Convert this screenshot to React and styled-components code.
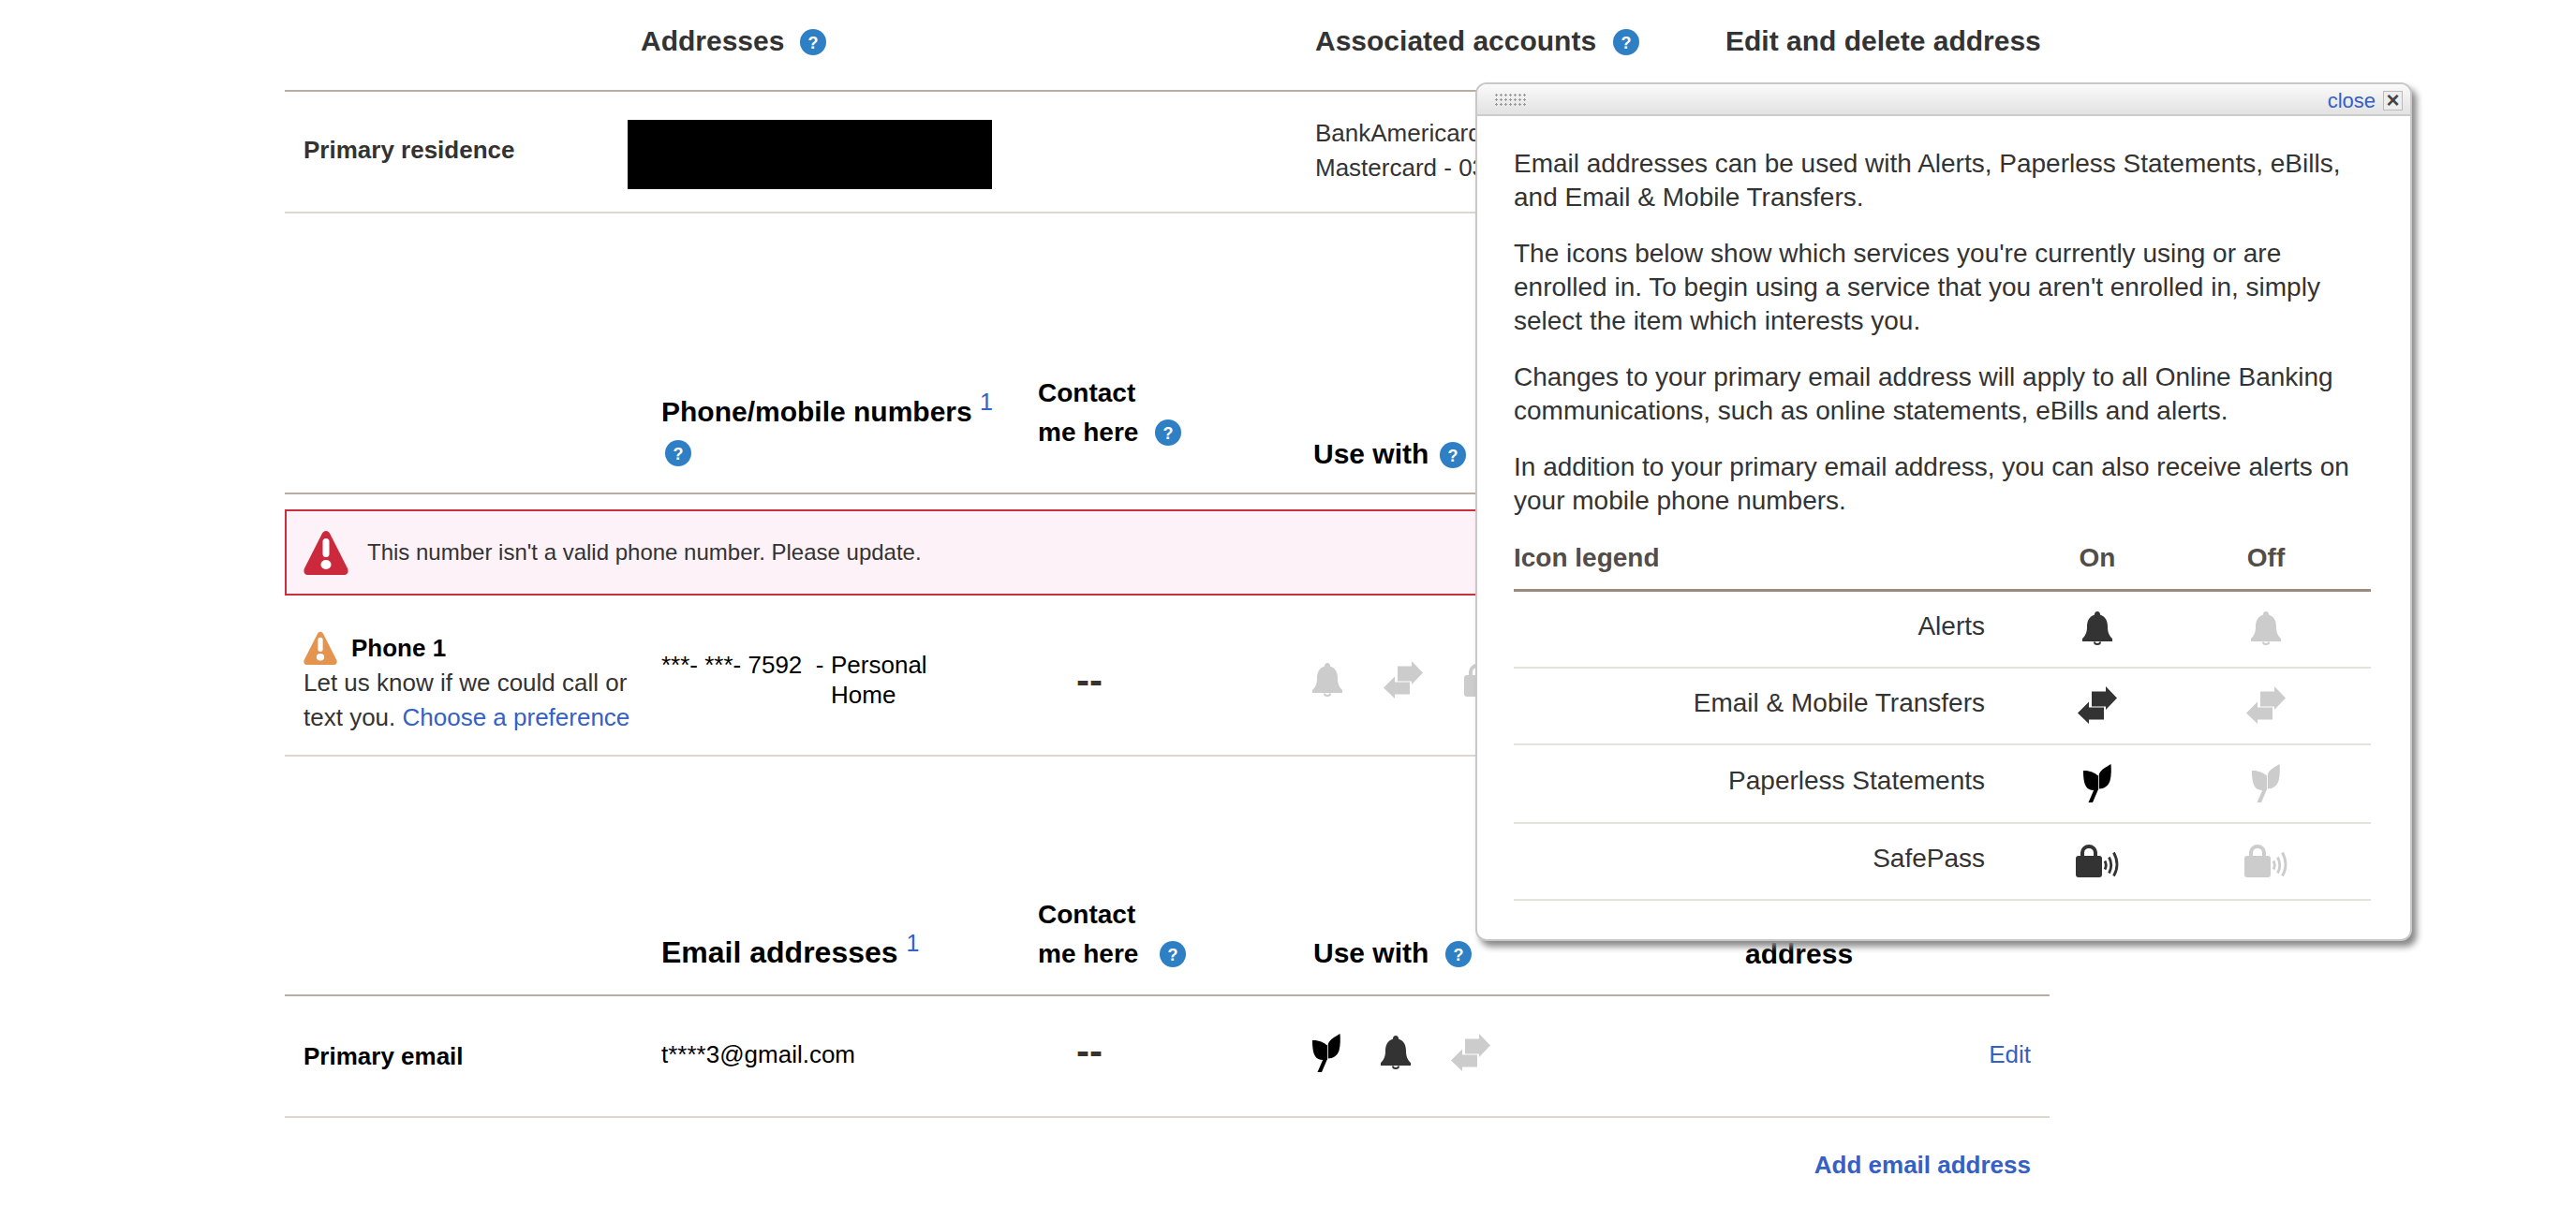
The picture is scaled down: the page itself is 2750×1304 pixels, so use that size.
import React from "react";
import styled, { createGlobalStyle } from "styled-components";

const GlobalStyle = createGlobalStyle`
  body {
    margin: 0;
    background: #fff;
    font-family: "Liberation Sans", Arial, sans-serif;
    color: #333;
  }
`;

const LINK = "#3560c5";

function Help({ gap = 14, block }) {
  return (
    <HelpSvg viewBox="0 0 28 28" $gap={gap} $block={block}>
      <circle cx="14" cy="14" r="14" fill="#2f7fc4" />
      <text x="14" y="20.5" textAnchor="middle" fontSize="18" fontWeight="700" fill="#fff" fontFamily="Liberation Sans">?</text>
    </HelpSvg>
  );
}

function Bell({ off }) {
  return (
    <IconSvg viewBox="0 0 32 36" width="32" height="36" $off={off}>
      <path d="M16 0c2 0 3 1.500 3 3.500 6 2 8 7 8 13 0 6 2 10 5 12.500v3H0v-3c3-2.500 5-6.500 5-12.500 0-6 2-11 8-13C13 1.500 14 0 16 0z" />
      <path d="M12 32.500a4 3.500 0 0 0 8 0h-2a2 1.500 0 0 1-4 0z" />
    </IconSvg>
  );
}

function Arrows({ off }) {
  return (
    <IconSvg viewBox="0 0 42 40" width="42" height="40" $off={off}>
      <path d="M15 5.500h15V0l12 12.500L30 25v-3.500H15z" />
      <path d="M0 28.500l12-12v6h16v13H12v4.500z" />
    </IconSvg>
  );
}

function Leaf({ off }) {
  return (
    <IconSvg viewBox="0 0 30 41" width="30" height="41" $off={off} $on="#000">
      <path d="M0 7c6-.5 12 2 16 5.500v15c-6 1.500-11 0-13-3.500C.5 20 0 13 0 7z" />
      <path d="M29.500 0C25 3 19 5 16.800 11v15.500c5.200 0 10.200-3.500 11.700-8.500C30 12 30 6 29.500 0z" />
      <path d="M12 26l4 1-6 14H5.500z" />
    </IconSvg>
  );
}

function Lock({ off }) {
  return (
    <IconSvg viewBox="0 0 46 35" width="46" height="35" $off={off}>
      <rect x="0" y="12" width="28" height="23" rx="3" />
      <path d="M7 14V8.500a7 6.500 0 0 1 14 0V14" fill="none" stroke="currentColor" strokeWidth="4" />
      <g fill="none" stroke="currentColor" strokeWidth="2.800">
        <path d="M31 17.500q2.500 4.500 0 9" />
        <path d="M35.500 13.500q4.500 8.500 0 17" />
        <path d="M40.500 8.500q7 13 0 25" />
      </g>
    </IconSvg>
  );
}

function Warning({ size, color }) {
  return (
    <WarnSvg viewBox="0 0 48 48" width={size} height={size}>
      <path d="M24 1c2 0 3.500 1.500 4.500 3.500L47 41c1.500 3.500 0 7-3.500 7h-39C1 48-.5 44.500 1 41L19.500 4.500C20.500 2.500 22 1 24 1z" fill={color} />
      <rect x="20.500" y="9" width="7" height="20" rx="3.500" fill="#fff" />
      <ellipse cx="24" cy="37" rx="5.500" ry="5" fill="#fff" />
    </WarnSvg>
  );
}

export default function App() {
  return (
    <Page>
      <GlobalStyle />
      <Table>
        <AddressHead>
          <span />
          <HeadCell>Addresses<Help gap={17} /></HeadCell>
          <HeadCell>Associated accounts<Help gap={18} /></HeadCell>
          <HeadCell>Edit and delete address</HeadCell>
        </AddressHead>
        <AddressRow>
          <RowLabel $top={24}>Primary residence</RowLabel>
          <Redacted />
          <Accounts>BankAmericard<br />Mastercard - 0392</Accounts>
        </AddressRow>

        <ColumnHead $height={300}>
          <span />
          <NumberHead>
            Phone/mobile numbers <Note>1</Note>
            <Help gap={4} block />
          </NumberHead>
          <ContactHead $bottom={43}>Contact<br />me here<Help gap={18} /></ContactHead>
          <UseHead $bottom={19}>Use with<Help gap={12} /></UseHead>
        </ColumnHead>
        <AlertBox>
          <Warning size={48} color="#cc2a3c" />
          <AlertText>This number isn't a valid phone number. Please update.</AlertText>
        </AlertBox>
        <PhoneRow>
          <PhoneInfo>
            <PhoneTitle><Warning size={36} color="#e39550" />Phone 1</PhoneTitle>
            Let us know if we could call or<br />
            text you. <TextLink>Choose a preference</TextLink>
          </PhoneInfo>
          <PhoneValue>
            <MaskedNumber>***- ***- 7592&nbsp; -&nbsp;</MaskedNumber>
            <span>Personal<br />Home</span>
          </PhoneValue>
          <Dashes $top={11}>--</Dashes>
          <IconGroup $gap={44} $top={10}>
            <Bell off />
            <Arrows off />
            <Lock off />
          </IconGroup>
        </PhoneRow>

        <ColumnHead $height={256}>
          <span />
          <EmailHead>Email addresses <Note>1</Note></EmailHead>
          <ContactHead $bottom={22}>Contact<br />me here<Help gap={23} /></ContactHead>
          <UseHead $bottom={22}>Use with<Help gap={18} /></UseHead>
          <EditHead $bottom={22}>address</EditHead>
        </ColumnHead>
        <EmailRow>
          <RowLabel $dark>Primary email</RowLabel>
          <EmailValue>t****3@gmail.com</EmailValue>
          <Dashes $top={-11}>--</Dashes>
          <IconGroup $gap={43} $top={-8}>
            <Leaf />
            <Bell />
            <Arrows off />
          </IconGroup>
          <RowAction><TextLink>Edit</TextLink></RowAction>
        </EmailRow>
        <AddRow><AddLink>Add email address</AddLink></AddRow>
      </Table>

      <Popup>
        <PopupBar>
          <Grip />
          <CloseLink>close</CloseLink>
          <CloseBox>×</CloseBox>
        </PopupBar>
        <PopupBody>
          <Para>Email addresses can be used with Alerts, Paperless Statements, eBills, and Email &amp; Mobile Transfers.</Para>
          <Para>The icons below show which services you're currently using or are enrolled in. To begin using a service that you aren't enrolled in, simply select the item which interests you.</Para>
          <Para>Changes to your primary email address will apply to all Online Banking communications, such as online statements, eBills and alerts.</Para>
          <Para>In addition to your primary email address, you can also receive alerts on your mobile phone numbers.</Para>
          <LegendHead>
            <span>Icon legend</span>
            <LegendCol>On</LegendCol>
            <LegendCol>Off</LegendCol>
          </LegendHead>
          <LegendRow>
            <LegendName>Alerts</LegendName>
            <LegendIcon><Bell /></LegendIcon>
            <LegendIcon><Bell off /></LegendIcon>
          </LegendRow>
          <LegendRow>
            <LegendName>Email &amp; Mobile Transfers</LegendName>
            <LegendIcon><Arrows /></LegendIcon>
            <LegendIcon><Arrows off /></LegendIcon>
          </LegendRow>
          <LegendRow $tall>
            <LegendName>Paperless Statements</LegendName>
            <LegendIcon><Leaf /></LegendIcon>
            <LegendIcon><Leaf off /></LegendIcon>
          </LegendRow>
          <LegendRow>
            <LegendName>SafePass</LegendName>
            <LegendIcon><Lock /></LegendIcon>
            <LegendIcon><Lock off /></LegendIcon>
          </LegendRow>
        </PopupBody>
      </Popup>
    </Page>
  );
}

const Page = styled.div`
  position: relative;
  width: 2750px;
  height: 1304px;
  overflow: hidden;
  padding-left: 304px;
  box-sizing: border-box;
`;

const Table = styled.div`
  width: 1884px;
`;

const HelpSvg = styled.svg`
  width: 28px;
  height: 28px;
  margin-left: ${({ $gap }) => $gap}px;
  vertical-align: ${({ $block }) => ($block ? "top" : "-5px")};
  display: ${({ $block }) => ($block ? "block" : "inline-block")};
  margin-top: ${({ $block }) => ($block ? "8px" : "0")};
`;

const IconSvg = styled.svg`
  display: block;
  flex: none;
  fill: currentColor;
  color: ${({ $off, $on }) => ($off ? "#ccc" : $on || "#333")};
`;

const WarnSvg = styled.svg`
  display: block;
  flex: none;
`;

const AddressHead = styled.div`
  display: grid;
  grid-template-columns: 380px 720px 438px 346px;
  height: 98px;
  box-sizing: border-box;
  padding-top: 22px;
  border-bottom: 2px solid #b8aea4;
`;

const HeadCell = styled.div`
  font-size: 30px;
  line-height: 44px;
  font-weight: 700;
  color: #333;
`;

const AddressRow = styled.div`
  display: grid;
  grid-template-columns: 366px 734px 438px 346px;
  align-items: start;
  height: 130px;
  box-sizing: border-box;
  padding-top: 20px;
  border-bottom: 2px solid #dcd8d0;
`;

const RowLabel = styled.div`
  padding-left: 20px;
  font-size: 26px;
  line-height: 36px;
  font-weight: 700;
  color: ${({ $dark }) => ($dark ? "#000" : "#333")};
  margin-top: ${({ $top }) => $top || 0}px;
`;

const Redacted = styled.div`
  width: 389px;
  height: 74px;
  margin-top: 10px;
  background: #000;
`;

const Accounts = styled.div`
  margin-top: 6px;
  font-size: 26px;
  line-height: 37px;
  white-space: nowrap;
`;

const RowAction = styled.div`
  padding-right: 20px;
  margin-top: -4px;
  font-size: 26px;
  line-height: 36px;
  text-align: right;
`;

const TextLink = styled.a`
  color: ${LINK};
`;

const ColumnHead = styled.div`
  display: grid;
  grid-template-columns: 402px 402px 294px 438px 348px;
  align-items: end;
  height: ${({ $height }) => $height}px;
  box-sizing: border-box;
  border-bottom: 2px solid #b8aea4;
  color: #000;
  font-weight: 700;
`;

const NumberHead = styled.div`
  font-size: 30px;
  line-height: 44px;
  padding-bottom: 28px;
`;

const EmailHead = styled.div`
  font-size: 32px;
  line-height: 44px;
  padding-bottom: 23px;
`;

const Note = styled.sup`
  color: ${LINK};
  font-size: 25px;
  font-weight: 400;
  line-height: 0;
  vertical-align: 12px;
`;

const ContactHead = styled.div`
  font-size: 28px;
  line-height: 42px;
  padding-bottom: ${({ $bottom }) => $bottom}px;
`;

const UseHead = styled.div`
  font-size: 30px;
  line-height: 44px;
  padding-bottom: ${({ $bottom }) => $bottom}px;
`;

const EditHead = styled.div`
  font-size: 30px;
  line-height: 42px;
  padding-left: 23px;
  padding-bottom: ${({ $bottom }) => $bottom}px;
`;

const AlertBox = styled.div`
  display: flex;
  align-items: center;
  gap: 20px;
  height: 92px;
  margin-top: 16px;
  padding-left: 18px;
  box-sizing: border-box;
  border: 2px solid #c9303e;
  background: #fdf2f8;
`;

const AlertText = styled.span`
  font-size: 24px;
  color: #333;
`;

const PhoneRow = styled.div`
  display: grid;
  grid-template-columns: 402px 402px 294px 438px 348px;
  align-items: center;
  height: 172px;
  box-sizing: border-box;
  border-bottom: 2px solid #dcd8d0;
`;

const PhoneInfo = styled.div`
  padding-left: 20px;
  margin-top: 16px;
  font-size: 26px;
  line-height: 37px;
  white-space: nowrap;
`;

const PhoneTitle = styled.div`
  display: flex;
  align-items: center;
  gap: 15px;
  font-weight: 700;
  color: #000;
  height: 38px;
`;

const PhoneValue = styled.div`
  display: flex;
  font-size: 26px;
  line-height: 32px;
  color: #000;
  margin-top: 9px;
`;

const MaskedNumber = styled.span`
  width: 181px;
  white-space: nowrap;
`;

const Dashes = styled.div`
  padding-left: 41px;
  margin-top: ${({ $top }) => $top}px;
  font-size: 42px;
  font-weight: 700;
  color: #333;
`;

const IconGroup = styled.div`
  display: flex;
  align-items: center;
  gap: ${({ $gap }) => $gap}px;
  margin: ${({ $top }) => $top}px 0 0 -1px;
`;

const EmailRow = styled.div`
  display: grid;
  grid-template-columns: 402px 402px 294px 438px 348px;
  align-items: center;
  height: 130px;
  box-sizing: border-box;
  border-bottom: 2px solid #dcd8d0;
`;

const EmailValue = styled.div`
  margin-top: -4px;
  font-size: 26px;
  color: #000;
`;

const AddRow = styled.div`
  padding: 32px 20px 0 0;
  text-align: right;
  font-size: 26px;
  line-height: 36px;
  font-weight: 700;
`;

const AddLink = styled.a`
  color: ${LINK};
`;

const Popup = styled.div`
  position: absolute;
  left: 1575px;
  top: 88px;
  width: 1000px;
  height: 917px;
  box-sizing: border-box;
  background: #fff;
  border: 2px solid #c8c8c8;
  border-radius: 12px;
  box-shadow: 5px 6px 7px #8a8a8a;
`;

const PopupBar = styled.div`
  display: flex;
  align-items: center;
  height: 32px;
  padding: 0 8px 0 18px;
  border-bottom: 2px solid #ccc;
  border-radius: 10px 10px 0 0;
  background: linear-gradient(#fafafa, #e2e2e2);
`;

const Grip = styled.div`
  width: 35px;
  height: 15px;
  background-image: radial-gradient(#999 1px, transparent 1.200px);
  background-size: 5px 5px;
`;

const CloseLink = styled.a`
  margin: 4px 0 0 auto;
  font-size: 22px;
  color: ${LINK};
`;

const CloseBox = styled.span`
  display: flex;
  align-items: center;
  justify-content: center;
  width: 21px;
  height: 21px;
  margin: 2px 0 0 8px;
  box-sizing: border-box;
  border: 1px solid #bbb;
  background: #eee;
  font-size: 24px;
  line-height: 1;
  font-weight: 700;
  color: #444;
`;

const PopupBody = styled.div`
  padding: 33px 42px 0 39px;
  font-size: 28px;
  line-height: 36px;
  color: #333;
`;

const Para = styled.p`
  margin: 0 0 24px;
`;

const LegendHead = styled.div`
  display: grid;
  grid-template-columns: 503px 240px 120px 1fr;
  margin-top: 25px;
  height: 54px;
  box-sizing: border-box;
  border-bottom: 3px solid #9a8b7a;
  font-weight: 700;
  color: #524d49;
`;

const LegendCol = styled.span`
  text-align: center;
  &:nth-child(2) {
    grid-column: 2;
  }
`;

const LegendRow = styled.div`
  display: grid;
  grid-template-columns: 503px 240px 120px 1fr;
  align-items: center;
  height: ${({ $tall }) => ($tall ? 84 : 82)}px;
  box-sizing: border-box;
  border-bottom: 2px solid #e5e1dc;
`;

const LegendName = styled.span`
  text-align: right;
  padding-bottom: 6px;
`;

const LegendIcon = styled.span`
  display: flex;
  justify-content: center;
  padding-bottom: 2px;
`;
